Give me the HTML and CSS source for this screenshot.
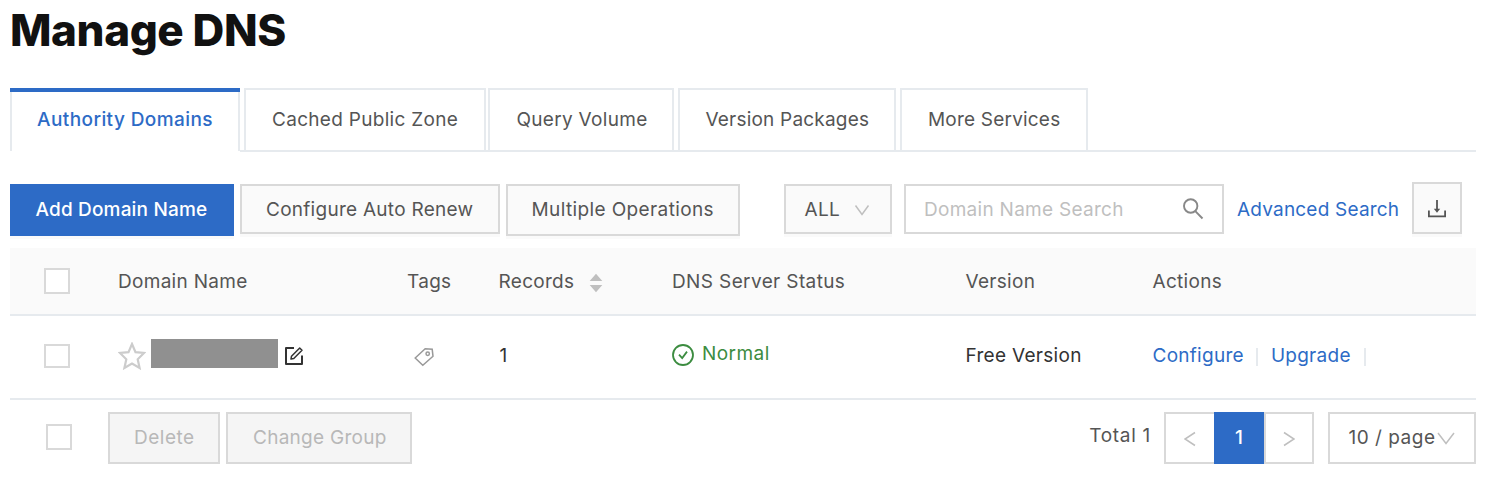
FILE: index.html
```html
<!DOCTYPE html>
<html lang="en">
<head>
<meta charset="utf-8">
<title>Manage DNS</title>
<link rel="stylesheet" href="styles.css">
</head>
<body>
<main class="page">
  <h1 class="title">Manage DNS</h1>

  <nav class="tabs">
    <a class="tab tab-active">Authority Domains</a>
    <a class="tab tab-cached">Cached Public Zone</a>
    <a class="tab tab-query">Query Volume</a>
    <a class="tab tab-version">Version Packages</a>
    <a class="tab tab-more">More Services</a>
  </nav>

  <section class="toolbar">
    <button class="btn btn-primary">Add Domain Name</button>
    <button class="btn btn-renew">Configure Auto Renew</button>
    <button class="btn btn-multi">Multiple Operations</button>
    <button class="btn btn-all"><span>ALL</span>
      <svg class="chevron" width="16" height="12" viewBox="0 0 16 12"><path d="M1.5 1.5 8 10.5 14.500 1.500"/></svg>
    </button>
    <div class="search">
      <span class="placeholder">Domain Name Search</span>
      <svg class="icon-search" width="22" height="22" viewBox="0 0 22 22"><circle cx="8.700" cy="8" r="6.700"/><path d="M13.300 13.200 20.500 20.500"/></svg>
    </div>
    <a class="link advanced">Advanced Search</a>
    <button class="btn btn-download" aria-label="Download">
      <svg width="20" height="20" viewBox="0 0 20 20"><path d="M10 1V11M1.900 11.500V17.300H18.100V11.500"/><path class="solid" d="M6.800 9.700H13.200L10 13.800Z"/></svg>
    </button>
  </section>

  <section class="table">
    <div class="row head">
      <div><span class="check"></span></div>
      <div>Domain Name</div>
      <div>Tags</div>
      <div class="records">Records
        <svg width="14" height="20" viewBox="0 0 14 20"><path d="M0.700 8 7 0.800 13.300 8ZM0.700 12H13.300L7 19.200Z"/></svg>
      </div>
      <div class="server">DNS Server Status</div>
      <div>Version</div>
      <div>Actions</div>
    </div>
    <div class="row body">
      <div><span class="check check-row"></span></div>
      <div class="domain">
        <svg class="star" width="28" height="28" viewBox="0 0 28 28"><path d="M14 2 17.500 10.200 26 11 19.700 17.300 21.600 26 14 21.600 6.400 26 8.300 17.300 2 11 10.500 10.200Z"/></svg>
        <span class="redacted"></span>
        <svg class="edit" width="20" height="20" viewBox="0 0 20 20"><path d="M10 2H2V18H18V9.500"/><path class="pen" d="M7 13 7.500 10.200 15.700 2 18 4.300 9.800 12.500Z"/></svg>
      </div>
      <div><svg class="tag" width="20" height="20" viewBox="0 0 20 20"><path d="M1.200 11 11.200 1.700 18.200 2.300 19 9.300 8.800 18.300Z"/><circle cx="13.700" cy="6.700" r="1.700"/></svg></div>
      <div class="count">1</div>
      <div class="status">
        <svg width="22" height="22" viewBox="0 0 22 22"><circle cx="11" cy="11" r="10"/><path d="M7 10.600 10.200 14 15 7.600"/></svg>
        <span>Normal</span>
      </div>
      <div>Free Version</div>
      <div class="actions"><a class="link">Configure</a><i class="divider"></i><a class="link">Upgrade</a><i class="divider"></i></div>
    </div>
  </section>

  <footer class="footer">
    <span class="check"></span>
    <button class="btn btn-disabled btn-delete">Delete</button>
    <button class="btn btn-disabled btn-group">Change Group</button>
    <span class="total">Total 1</span>
    <div class="pager">
      <span class="page-prev"><svg class="chevron" width="12" height="16" viewBox="0 0 12 16"><path d="M11 1.500 1 8 11 14.500"/></svg></span>
      <span class="page-current">1</span>
      <span class="page-next"><svg class="chevron" width="12" height="16" viewBox="0 0 12 16"><path d="M1 1.500 11 8 1 14.500"/></svg></span>
    </div>
    <div class="page-size"><span>10 / page</span>
      <svg class="chevron" width="18" height="13" viewBox="0 0 18 13"><path d="M1 1 9 11.500 17 1"/></svg>
    </div>
  </footer>
</main>
</body>
</html>
```
FILE: styles.css
```css
* { box-sizing: border-box; }
body {
  margin: 0;
  background: #fff;
  color: #555;
  font: 400 19px/28px Inter, "Liberation Sans", sans-serif;
  letter-spacing: 0.3px;
}
svg { display: block; fill: none; flex: none; }
.page { width: 1476px; padding-left: 10px; }
.title {
  height: 88px;
  margin: 0;
  padding-top: 2px;
  color: #111;
  font-size: 44px;
  font-weight: 800;
  line-height: 56px;
  letter-spacing: -0.4px;
}
.link { color: #2d6bc6; }

.tabs {
  display: flex;
  gap: 4px;
  height: 64px;
  background: linear-gradient(#e6eaee, #e6eaee) left bottom / 100% 2px no-repeat;
}
.tab {
  height: 64px;
  padding: 16px 0 0 26px;
  border: 2px solid #e6eaee;
  white-space: nowrap;
}
.tab-active {
  width: 230px;
  padding: 18px 0 0 27px;
  border: 0;
  background:
    linear-gradient(#2d6bc6, #2d6bc6) left top / 100% 4px no-repeat,
    linear-gradient(#e6eaee, #e6eaee) left top / 2px 63px no-repeat,
    linear-gradient(#e6eaee, #e6eaee) right top / 2px 63px no-repeat,
    #fff;
  color: #2d6bc6;
  font-weight: 500;
  letter-spacing: 0.42px;
}
.tab-cached { width: 242px; }
.tab-query { width: 186px; margin-left: -2px; padding-left: 26.500px; }
.tab-version { width: 218px; padding-left: 25.500px; letter-spacing: 0.2px; }
.tab-more { width: 188px; letter-spacing: 0.2px; }

.toolbar {
  display: flex;
  align-items: flex-start;
  height: 96px;
  padding-top: 32px;
}
.btn {
  display: block;
  flex: none;
  height: 50px;
  margin: 0 6px 0 0;
  padding: 2px 0 0 24px;
  border: 2px solid #d9d9d9;
  border-radius: 0;
  background: #fafafa;
  box-shadow: 0 3px 0 rgba(0, 0, 0, 0.018);
  color: #555;
  font: inherit;
  letter-spacing: 0.27px;
  text-align: left;
  white-space: nowrap;
}
.btn-primary {
  width: 224px;
  height: 52px;
  padding: 0 0 0 23.500px;
  border-color: #2d6bc6;
  background: #2d6bc6;
  color: #fff;
  font-weight: 500;
  letter-spacing: 0.17px;
}
.btn-renew { width: 260px; }
.btn-multi { width: 234px; height: 52px; margin-right: 44px; padding: 0 0 0 23.500px; letter-spacing: 0.38px; }
.btn-all {
  display: flex;
  align-items: center;
  gap: 14px;
  width: 108px;
  margin-right: 12px;
  padding-left: 18.500px;
}
.chevron { stroke: #bfbfbf; stroke-width: 1.5; }
.search {
  display: flex;
  align-items: center;
  justify-content: space-between;
  flex: none;
  width: 320px;
  height: 50px;
  padding: 0 18px;
  border: 2px solid #d9d9d9;
}
.placeholder { padding-top: 2px; color: #bfbfbf; letter-spacing: 0.28px; }
.icon-search { stroke: #888; stroke-width: 1.9; }
.advanced {
  width: 175px;
  padding: 12px 0 0 13px;
  margin-right: 13px;
  letter-spacing: 0.2px;
  white-space: nowrap;
}
.btn-download {
  display: flex;
  align-items: center;
  justify-content: center;
  width: 50px;
  height: 52px;
  margin: -2px 0 0;
  padding: 2px 0 0;
  stroke: #555;
  stroke-width: 1.8;
}
.btn-download .solid { fill: #555; stroke: none; }

.row {
  display: grid;
  grid-template-columns: 108px 289px 91.500px 173.500px 293.500px 187px 1fr;
  align-items: center;
  border-bottom: 2px solid #e6eaee;
}
.head { height: 68px; padding-top: 2px; background: #fafafa; }
.head .check { margin-top: -2px; }
.body { height: 84px; padding-bottom: 2px; color: #333; }
.check {
  display: block;
  flex: none;
  width: 26px;
  height: 26px;
  margin-left: 34px;
  border: 2px solid #d9d9d9;
  background: #fff;
}
.check-row { height: 24px; }
.records { display: flex; align-items: center; gap: 15px; }
.records svg { fill: #bfbfbf; margin-top: 2px; }
.server { letter-spacing: 0.38px; }
.domain { display: flex; align-items: center; }
.star { stroke: #ccc; stroke-width: 2.2; }
.redacted {
  width: 127px;
  height: 29px;
  margin: -5px 6px 0 5.400px;
  background: #909090;
}
.edit { margin-left: -0.400px; stroke: #333; stroke-width: 2; stroke-linejoin: round; }
.edit .pen { stroke-width: 1.5; }
.tag { margin: 2px 0 0 7px; stroke: #999; stroke-width: 1.5; }
.count { padding-left: 1px; }
.status { display: flex; align-items: center; gap: 8px; color: #3c8c40; letter-spacing: 0.45px; }
.status svg { margin-top: -2px; stroke: #3c8c40; stroke-width: 1.8; }
.status span { margin-top: -4px; }
.actions { display: flex; align-items: center; letter-spacing: 0.27px; }
.divider { width: 2px; height: 18px; margin: 2px 13px 0 12px; background: #e6eaee; }
.divider:last-child { margin-left: 13px; }

.footer { display: flex; align-items: flex-start; padding-top: 12px; }
.footer .check { margin: 12px 36px 0 36px; }
.btn-disabled {
  height: 52px;
  padding-top: 0;
  background: #f5f5f5;
  box-shadow: none;
  color: #b8b8b8;
}
.btn-delete { width: 112px; letter-spacing: 0.5px; }
.btn-group { width: 186px; padding-left: 25px; }
.total { margin: 10px 13px 0 auto; letter-spacing: 0.7px; }
.pager { display: flex; width: 150px; height: 52px; text-align: center; }
.pager span { display: flex; align-items: center; justify-content: center; width: 50px; border: 2px solid #d9d9d9; }
.pager .page-prev { border-right: 0; padding-top: 2px; }
.pager .page-next { padding-top: 2px; }
.pager .page-current { border-color: #2d6bc6; background: #2d6bc6; color: #fff; font-weight: 500; }
.page-size {
  display: flex;
  align-items: center;
  gap: 2px;
  width: 148px;
  height: 52px;
  margin-left: 14px;
  padding: 0 0 0 18.500px;
  border: 2px solid #d9d9d9;
  letter-spacing: 0.5px;
  white-space: nowrap;
}
```
